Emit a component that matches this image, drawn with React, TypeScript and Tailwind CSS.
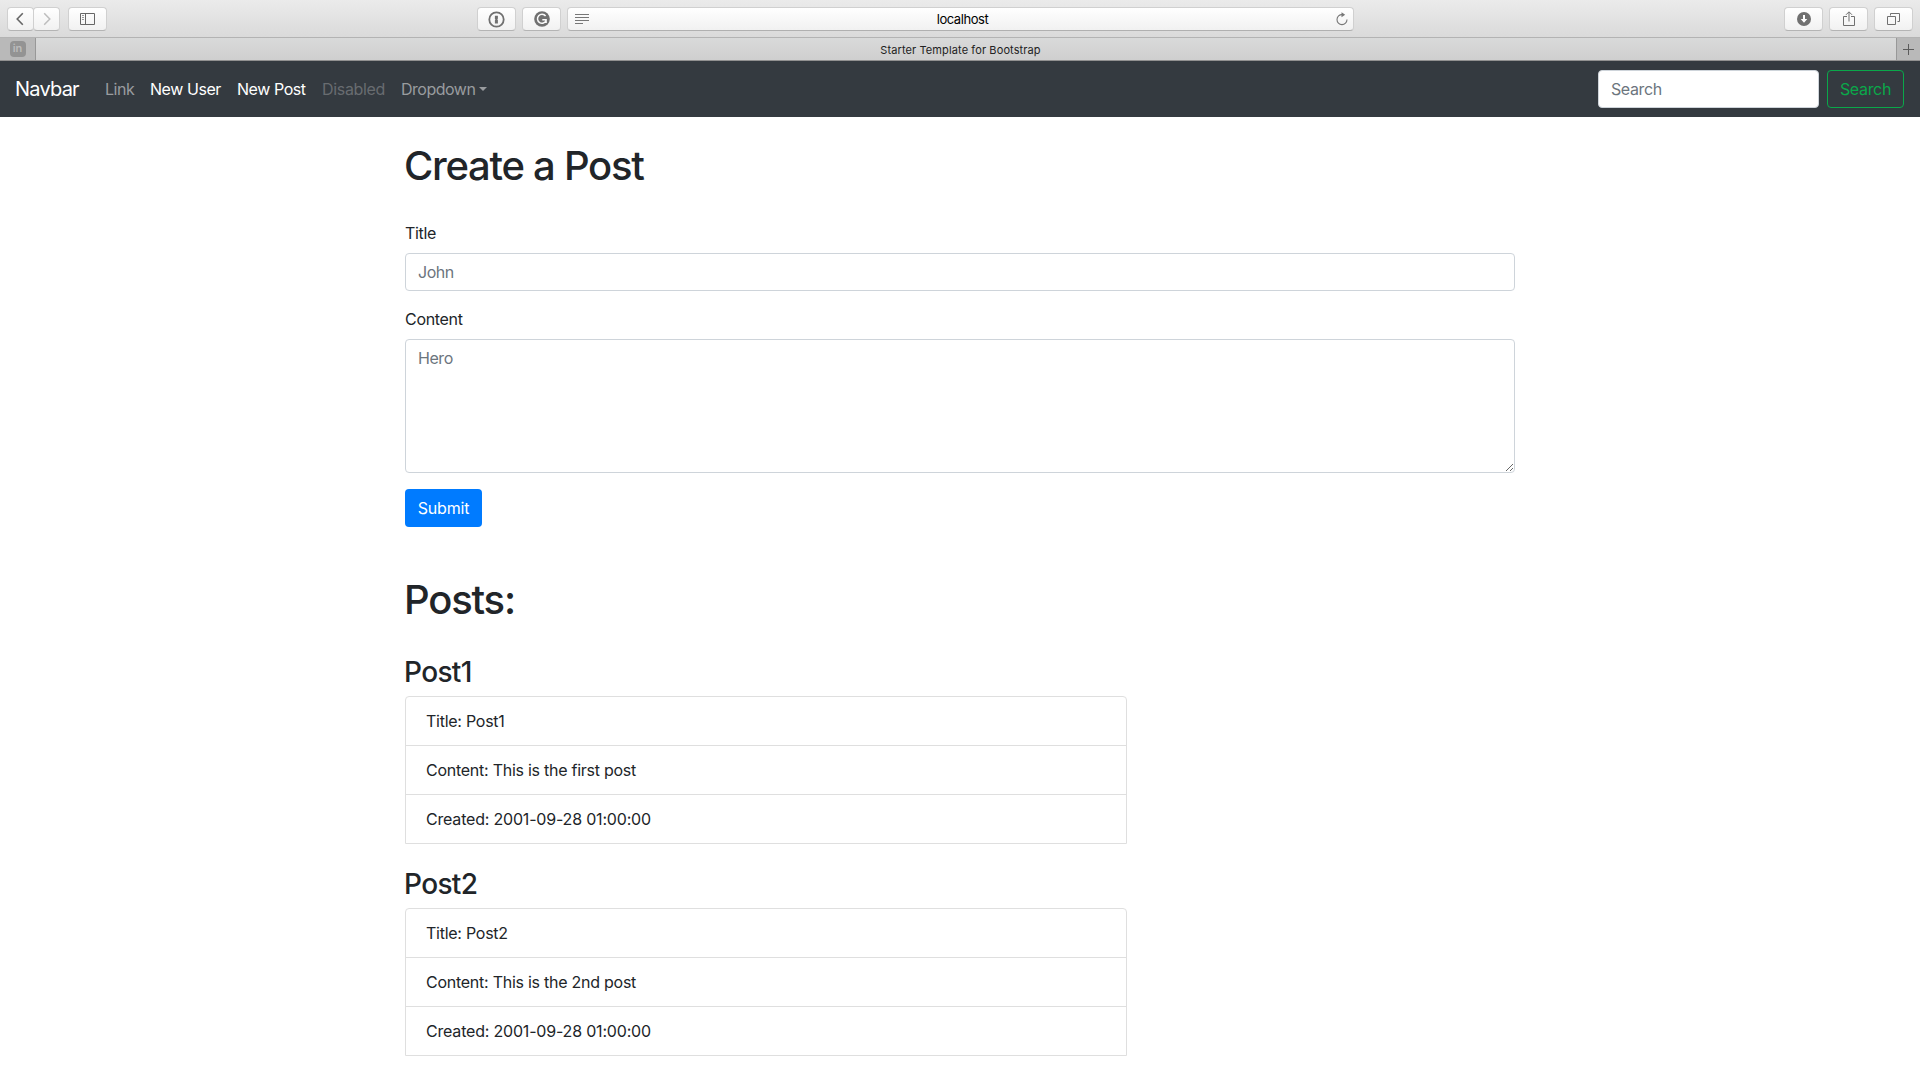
import type { ReactNode } from "react";

function ToolButton({ children, className = "" }: { children: ReactNode; className?: string }) {
  return (
    <button
      className={`flex h-6 shrink-0 items-center justify-center rounded-[4px] border border-[#d0d0d0] border-b-[#b4b4b4] bg-linear-to-b from-white to-[#f1f1f1] ${className}`}
    >
      {children}
    </button>
  );
}

function Toolbar() {
  return (
    <div className="flex h-[38px] items-start border-b border-[#b3b3b3] bg-linear-to-b from-[#ebebeb] to-[#dadada] pt-[7px] pr-2 pl-[7px]">
      <ToolButton className="w-[27px]">
        <svg width="8" height="14" viewBox="0 0 8 14" fill="none" stroke="#666" strokeWidth="1.6" className="mr-0.5">
          <path d="M6.8 1.2 1.2 7l5.6 5.8" />
        </svg>
      </ToolButton>
      <ToolButton className="-ml-px w-[27px]">
        <svg width="8" height="14" viewBox="0 0 8 14" fill="none" stroke="#bdbdbd" strokeWidth="1.5" className="ml-px">
          <path d="M1.2 1.2 6.8 7l-5.6 5.8" />
        </svg>
      </ToolButton>
      <ToolButton className="ml-2 w-[39px]">
        <svg width="15" height="12" viewBox="0 0 15 12" fill="none" stroke="#666">
          <path d="M.5.5h14v11H.5zM5.5.5v11" />
          <path d="M2 2.5h2M2 4.5h2M2 6.5h2" stroke="#999" />
        </svg>
      </ToolButton>

      <ToolButton className="ml-[370px] w-[39px]">
        <svg width="17" height="17" viewBox="0 0 17 17">
          <circle cx="8.5" cy="8.5" r="7.2" fill="none" stroke="#707070" strokeWidth="1.8" />
          <path d="M6.9 4.7h3v2.9l-.6.8.6.6v3.4h-3V9.3l.6-.8-.6-.6z" fill="#707070" />
        </svg>
      </ToolButton>
      <ToolButton className="ml-[6px] w-[39px]">
        <svg width="16" height="16" viewBox="0 0 16 16">
          <circle cx="8" cy="8" r="7.8" fill="#707070" />
          <path d="M11.6 5A4.5 4.5 0 1 0 12.2 9.3M8.3 8.7h3.8v3.2" fill="none" stroke="#fafafa" strokeWidth="1.5" />
        </svg>
      </ToolButton>

      <div className="ml-[6px] flex h-6 w-[787px] items-center justify-between rounded-[4px] border border-[#d0d0d0] border-b-[#b0b0b0] bg-linear-to-b from-white to-[#f1f1f1] pr-[5px] pl-[7px]">
        <svg width="14" height="11" viewBox="0 0 14 11" stroke="#777">
          <path d="M0 .5h14M0 3.5h14M0 6.5h14M0 9.5h8" />
        </svg>
        <span className="pt-px text-[13px] leading-none tracking-[-0.034em] text-black">localhost</span>
        <svg width="12" height="14" viewBox="0 0 12 14" fill="none" stroke="#777" strokeWidth="1.1">
          <path d="M6.2 2.6A5 5 0 1 0 11 7.6" />
          <path d="M5.5.2 9.2 2.7 5.5 5.2z" fill="#777" stroke="none" />
        </svg>
      </div>

      <ToolButton className="ml-auto w-[39px]">
        <svg width="14" height="14" viewBox="0 0 14 14">
          <circle cx="7" cy="7" r="7" fill="#707070" />
          <path d="M6 3h2v4h2.3L7 10.7 3.7 7H6z" fill="#fff" />
        </svg>
      </ToolButton>
      <ToolButton className="ml-[6px] w-[39px]">
        <svg width="12" height="16" viewBox="0 0 12 16" fill="none" stroke="#707070" className="-mt-px">
          <path d="M4 5.5H.5v9h11v-9H8M6 1v9.5M3 3.8 6 .8l3 3" />
        </svg>
      </ToolButton>
      <ToolButton className="mr-[-1px] ml-[6px] w-[39px]">
        <svg width="13" height="12" viewBox="0 0 13 12" fill="none" stroke="#707070">
          <path d="M.5 3.5h8v8h-8zM3.5 2.5v-2h9v8h-2" />
        </svg>
      </ToolButton>
    </div>
  );
}

function TabBar() {
  return (
    <div className="flex h-[23px] border-b border-[#919191] bg-linear-to-b from-[#d9dada] to-[#cfcfcf]">
      <div className="flex w-9 items-center justify-center border-r border-[#989898] bg-[#b9b9b9]">
        <span className="flex size-4 items-center justify-center rounded-[4px] bg-[#939393] pb-px text-[11px] leading-none font-semibold text-[#bcbcbc]">
          in
        </span>
      </div>
      <div className="flex flex-1 items-center justify-center pr-[11px] pt-px text-[11px] tracking-[0.01em] text-[#222]">
        Starter Template for Bootstrap
      </div>
      <div className="flex w-6 items-center justify-center border-l border-[#989898] bg-[#b9b9b9]">
        <svg width="11" height="11" viewBox="0 0 11 11" stroke="#5c5c5c">
          <path d="M5.5 0v11M0 5.5h11" />
        </svg>
      </div>
    </div>
  );
}

function Navbar() {
  return (
    <nav className="flex h-14 items-center bg-[#343a40] px-4 text-[#999c9f]">
      <a className="mr-4 -ml-px w-[66px] text-xl leading-[30px] tracking-[-0.039em] whitespace-nowrap text-white">
        Navbar
      </a>
      <div className="flex flex-1 items-center tracking-[-0.027em] whitespace-nowrap">
        <a className="w-[45px] px-2">Link</a>
        <a className="w-[87px] px-2 text-white">New User</a>
        <a className="w-[85px] px-2 text-white">New Post</a>
        <a className="w-[79px] px-2 tracking-[-0.02em] text-[#686c70]">Disabled</a>
        <a className="flex items-center px-2 tracking-[-0.031em]">
          Dropdown
          <span className="ml-[4px] border-x-[4.5px] border-t-[4.5px] border-x-transparent border-t-[#999c9f]" />
        </a>
      </div>
      <input
        className="mr-2 h-[38px] w-[221px] rounded border border-[#ced4da] bg-white px-3 tracking-[-0.025em] placeholder:text-[#6c757d]"
        placeholder="Search"
      />
      <button className="h-[38px] w-[77px] rounded border border-[#0aa84a] tracking-[-0.02em] text-[#0aa84a]">
        Search
      </button>
    </nav>
  );
}

const posts = [
  { name: "Post1", content: "This is the first post", created: "2001-09-28 01:00:00" },
  { name: "Post2", content: "This is the 2nd post", created: "2001-09-28 01:00:00" },
];

export default function App() {
  return (
    <div className="h-[1080px] overflow-hidden bg-white font-['Inter',sans-serif] text-base leading-6 text-[#212529]">
      <Toolbar />
      <TabBar />
      <Navbar />
      <main className="mx-auto w-[1110px] pt-[25px]">
        <h1 className="-ml-px text-[40px] leading-[48px] font-medium tracking-[-0.032em]">Create a Post</h1>
        <form className="mt-[31px] flex flex-col items-start tracking-[-0.019em]" onSubmit={(e) => e.preventDefault()}>
          <label htmlFor="title">Title</label>
          <input
            id="title"
            className="mt-2 h-[38px] w-full rounded border border-[#ced4da] px-3 tracking-[-0.028em] placeholder:text-[#6c757d]"
            placeholder="John"
          />
          <label htmlFor="content" className="mt-4">
            Content
          </label>
          <textarea
            id="content"
            className="mt-2 h-[134px] w-full rounded border border-[#ced4da] px-3 py-1.5 tracking-[-0.028em] placeholder:text-[#6c757d]"
            placeholder="Hero"
          />
          <button className="mt-4 h-[38px] w-[77px] rounded bg-[#007bff] tracking-[-0.01em] text-white">Submit</button>
        </form>
        <h1 className="mt-[49px] -ml-px text-[40px] leading-[48px] font-medium tracking-[-0.03em]">Posts:</h1>
        <div className="mt-8 flex flex-col gap-6">
          {posts.map((post) => (
            <section key={post.name}>
              <h3 className="-ml-px text-[28px] leading-[33px] font-medium tracking-[-0.023em]">{post.name}</h3>
              <ul className="mt-[7px] w-[722px] divide-y divide-[#dfdfdf] rounded-t border border-[#dfdfdf]">
                <li className="h-[49px] px-5 py-3 tracking-[-0.016em]">Title: {post.name}</li>
                <li className="h-[49px] px-5 py-3 tracking-[-0.016em]">Content: {post.content}</li>
                <li className="h-12 px-5 py-3 tracking-[-0.012em]">Created: {post.created}</li>
              </ul>
            </section>
          ))}
        </div>
      </main>
    </div>
  );
}
